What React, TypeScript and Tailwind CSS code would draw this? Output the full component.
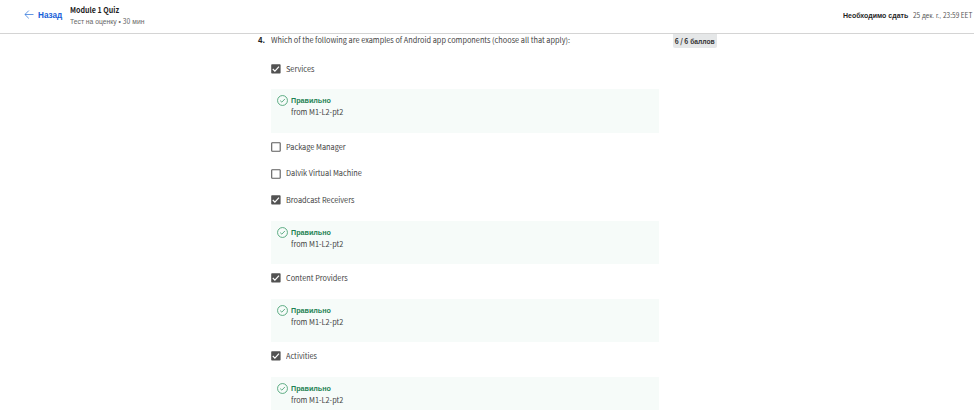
import React from "react";

const source = "font-['Noto_Sans_CJK_SC',sans-serif]";
const arial = "font-['Liberation_Sans',Arial,sans-serif]";

type Option = { label: string; checked: boolean };

const options: Option[] = [
  { label: "Services", checked: true },
  { label: "Package Manager", checked: false },
  { label: "Dalvik Virtual Machine", checked: false },
  { label: "Broadcast Receivers", checked: true },
  { label: "Content Providers", checked: true },
  { label: "Activities", checked: true },
];

function Checkbox({ checked }: { checked: boolean }) {
  return (
    <svg className="h-[10px] w-[10px] shrink-0" viewBox="0 0 10 10" fill="none">
      {checked ? (
        <>
          <rect x="0.2" y="0.2" width="9.4" height="9.4" rx="0.8" fill="#525252" />
          <path d="M1.8 5 3.9 7.1 8 2.7" stroke="#fff" strokeWidth="1.2" />
        </>
      ) : (
        <rect x="0.7" y="0.7" width="8.5" height="8.5" rx="0.5" stroke="#5c5c5c" strokeWidth="1.1" />
      )}
    </svg>
  );
}

function Feedback() {
  return (
    <div className="mt-[7px] mb-[1px] flex h-[43.33px] items-start bg-[#f6fbf9] pl-[6px] pt-[6px]">
      <svg className="h-[11px] w-[11px] shrink-0" viewBox="0 0 10 10" fill="none" stroke="#3f9c6c" strokeWidth="0.75">
        <circle cx="5" cy="5" r="4.5" />
        <path d="M2.9 5.1 4.4 6.5 7.2 3.6" />
      </svg>
      <div className="ml-[3px] flex flex-col whitespace-nowrap">
        <span className={`${arial} origin-left scale-x-[0.885] text-[8.1px] leading-[11px] font-bold text-[#1f8354]`}>Правильно</span>
        <span className="origin-left scale-x-[0.94] text-[7.8px] leading-[12px] text-[#444]">from M1-L2-pt2</span>
      </div>
    </div>
  );
}

export default function App() {
  return (
    <div className={`flex h-[410px] w-[974px] flex-col overflow-hidden bg-white ${source}`}>
      <header className="flex h-[34px] shrink-0 items-start justify-between border-b border-[#d4d4d4] pl-[24px]">
        <div className="flex items-start">
          <svg className="mt-[10px] h-[9px] w-[10px]" viewBox="0 0 10 9" fill="none" stroke="#3b7ddd" strokeWidth="0.8">
            <path d="M9.5 4.5H1M4.8 0.6 0.9 4.5 4.8 8.4" />
          </svg>
          <span className={`${arial} mt-[9px] ml-[4px] w-[32px] origin-left scale-x-[0.88] text-[9.3px] leading-[12px] font-bold whitespace-nowrap text-[#1560d8]`}>Назад</span>
          <div className="mt-[3.5px] flex flex-col whitespace-nowrap">
            <span className="origin-left scale-x-[0.91] text-[7.8px] leading-[12px] font-bold text-[#1f1f1f]">Module 1 Quiz</span>
            <span className={`${arial} origin-left scale-x-[0.88] text-[7.7px] leading-[11px] text-[#666]`}>
              Тест на оценку • <span className={`${source} leading-none`}>30</span> мин
            </span>
          </div>
        </div>
        <div className={`${arial} mt-[10px] flex items-center leading-[11px] whitespace-nowrap`}>
          <span className="w-[69.5px] origin-left scale-x-[0.91] text-[7.7px] font-bold text-[#1f1f1f]">Необходимо сдать</span>
          <span className="w-[61.5px] origin-left scale-x-[0.87] text-[7.5px] text-[#555]">
            <span className={`${source} leading-none`}>25</span> дек. г., <span className={`${source} leading-none`}>23:59 EET</span>
          </span>
        </div>
      </header>
      <main className="flex h-[375.5px] shrink-0 items-start overflow-hidden pl-[258px]">
        <span className="w-[13px] shrink-0 text-[7.8px] leading-[12px] font-bold text-[#1f1f1f]">4.</span>
        <section className="w-[387.5px] shrink-0">
          <h1 className="mb-[9.7px] origin-left scale-x-[0.94] text-[7.8px] leading-[12px] whitespace-nowrap text-[#444]">
            Which of the following are examples of Android app components (choose all that apply):
          </h1>
          {options.map((option) => (
            <div key={option.label}>
              <div className="flex h-[26.67px] items-center gap-[5px]">
                <Checkbox checked={option.checked} />
                <span className="-mt-px origin-left scale-x-[0.94] text-[7.8px] leading-[12px] whitespace-nowrap text-[#444]">{option.label}</span>
              </div>
              {option.checked && <Feedback />}
            </div>
          ))}
        </section>
        <div className="ml-[14.5px] flex h-[14px] w-[44px] shrink-0 items-center justify-center rounded-b-[2px] bg-[#e5e7e8] text-[#333]">
          <span className={`${arial} mt-px scale-x-[0.92] text-[7.3px] leading-[12px] font-bold whitespace-nowrap`}>
            <span className={`${source} leading-none`}>6 / 6</span> баллов
          </span>
        </div>
      </main>
    </div>
  );
}
